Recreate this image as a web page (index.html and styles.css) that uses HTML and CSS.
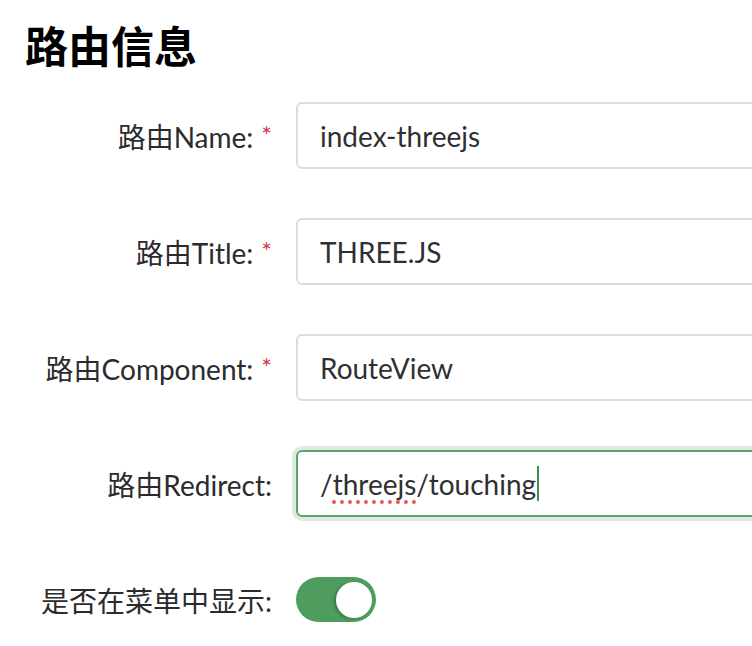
FILE: index.html
```html
<!DOCTYPE html>
<html lang="zh">
<head>
<meta charset="utf-8">
<title>路由信息</title>
<link rel="stylesheet" href="styles.css">
</head>
<body>
<div class="page">
  <h1 class="title">路由信息</h1>
  <div class="form">
    <div class="row">
      <div class="label">路由Name:<span class="req">*</span></div>
      <div class="field"><div class="input">index-threejs</div></div>
    </div>
    <div class="row">
      <div class="label">路由Title:<span class="req">*</span></div>
      <div class="field"><div class="input">THREE.JS</div></div>
    </div>
    <div class="row">
      <div class="label">路由Component:<span class="req">*</span></div>
      <div class="field"><div class="input">RouteView</div></div>
    </div>
    <div class="row">
      <div class="label">路由Redirect:</div>
      <div class="field"><div class="input focused">/<span class="misspelled">threejs</span>/touching<span class="caret"></span></div></div>
    </div>
    <div class="row switch-row">
      <div class="label">是否在菜单中显示:</div>
      <div class="field"><div class="switch on"><span class="knob"></span></div></div>
    </div>
  </div>
</div>
</body>
</html>
```
FILE: styles.css
```css
html, body {
  margin: 0;
  padding: 0;
  background: #ffffff;
  overflow: hidden;
}
body {
  font-family: Lato, "Noto Sans CJK SC", sans-serif;
  color: #303133;
}
.page {
  padding: 14px 0 0 0;
}
.title {
  margin: 0 0 0 25px;
  font-family: "Noto Sans CJK SC", sans-serif;
  font-weight: 700;
  font-size: 43px;
  line-height: 60px;
  color: #000;
}
.form {
  margin-top: 28px;
  display: flex;
  flex-direction: column;
  gap: 49px;
}
.row {
  display: grid;
  grid-template-columns: 272px 600px;
  column-gap: 24px;
  align-items: center;
}
.label {
  text-align: right;
  font-size: 28px;
  color: #2b2b2e;
  white-space: nowrap;
}
.req {
  color: #d0344f;
  margin-left: 8px;
  font-size: 25px;
  position: relative;
  top: -3px;
}
.input {
  box-sizing: border-box;
  height: 67px;
  border: 2px solid #dcdce0;
  border-radius: 6px;
  padding: 0 22px;
  display: flex;
  align-items: center;
  font-size: 28px;
  color: #2f3033;
  white-space: nowrap;
}
.input.focused {
  border-color: #5ba46b;
  box-shadow: 0 0 0 4px #dcebdd;
}
.misspelled {
  text-decoration: underline dotted #e45a50;
  text-decoration-thickness: 4px;
  text-underline-offset: 6px;
}
.caret {
  display: inline-block;
  width: 2px;
  height: 35px;
  background: #3f8f4f;
  margin-left: 1px;
}
.switch-row {
  margin-top: 11px;
}
.switch {
  box-sizing: border-box;
  width: 80px;
  height: 45px;
  border-radius: 23px;
  background: #4e9d5e;
  padding: 0 4px;
  display: flex;
  align-items: center;
  justify-content: flex-end;
}
.knob {
  width: 36px;
  height: 36px;
  border-radius: 50%;
  background: #fff;
  box-shadow: -2px 1px 3px rgba(0,0,0,0.25);
}
```
